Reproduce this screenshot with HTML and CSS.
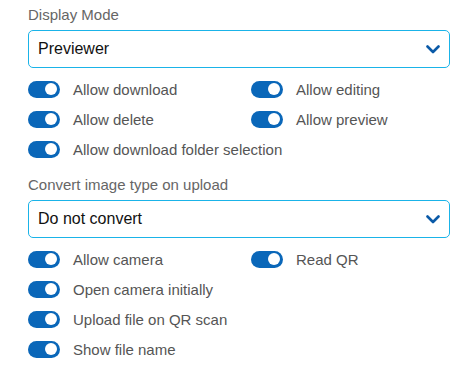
FILE: index.html
```html
<!DOCTYPE html>
<html>
<head>
<meta charset="utf-8">
<link rel="stylesheet" href="styles.css">
</head>
<body>
<div class="panel">
  <div class="field-label">Display Mode</div>
  <div class="select">
    <span class="select-value">Previewer</span>
    <svg class="chevron" width="14" height="9" viewBox="0 0 14 9"><path d="M1.5 1.5 L7 7 L12.5 1.5" fill="none" stroke="#0a5aa8" stroke-width="2.6" stroke-linecap="round" stroke-linejoin="round"/></svg>
  </div>
  <div class="toggles">
    <div class="toggle-row"><span class="switch"><span class="knob"></span></span><span class="toggle-label">Allow download</span></div>
    <div class="toggle-row"><span class="switch"><span class="knob"></span></span><span class="toggle-label">Allow editing</span></div>
    <div class="toggle-row"><span class="switch"><span class="knob"></span></span><span class="toggle-label">Allow delete</span></div>
    <div class="toggle-row"><span class="switch"><span class="knob"></span></span><span class="toggle-label">Allow preview</span></div>
    <div class="toggle-row wide"><span class="switch"><span class="knob"></span></span><span class="toggle-label">Allow download folder selection</span></div>
  </div>

  <div class="field-label second">Convert image type on upload</div>
  <div class="select">
    <span class="select-value">Do not convert</span>
    <svg class="chevron" width="14" height="9" viewBox="0 0 14 9"><path d="M1.5 1.5 L7 7 L12.5 1.5" fill="none" stroke="#0a5aa8" stroke-width="2.6" stroke-linecap="round" stroke-linejoin="round"/></svg>
  </div>
  <div class="toggles">
    <div class="toggle-row"><span class="switch"><span class="knob"></span></span><span class="toggle-label">Allow camera</span></div>
    <div class="toggle-row"><span class="switch"><span class="knob"></span></span><span class="toggle-label">Read QR</span></div>
    <div class="toggle-row wide"><span class="switch"><span class="knob"></span></span><span class="toggle-label">Open camera initially</span></div>
    <div class="toggle-row wide"><span class="switch"><span class="knob"></span></span><span class="toggle-label">Upload file on QR scan</span></div>
    <div class="toggle-row wide"><span class="switch"><span class="knob"></span></span><span class="toggle-label">Show file name</span></div>
  </div>
</div>
</body>
</html>
```

FILE: styles.css
```css
html, body {
  margin: 0;
  padding: 0;
  background: #ffffff;
}
body {
  font-family: "Liberation Sans", Arial, sans-serif;
}
.panel {
  width: 422px;
  padding: 6px 0 0 28px;
}
.field-label {
  font-size: 15px;
  line-height: 18px;
  color: #666666;
  margin-bottom: 6px;
}
.field-label.second {
  margin-top: 12px;
}
.select {
  box-sizing: border-box;
  height: 38px;
  border: 1px solid #1ab3e8;
  border-radius: 5px;
  display: flex;
  align-items: center;
  justify-content: space-between;
  padding: 0 9px 0 9px;
}
.select-value {
  font-size: 16px;
  color: #111111;
}
.chevron {
  display: block;
  margin-top: 1px;
}
.toggles {
  margin-top: 6px;
  display: grid;
  grid-template-columns: 223px 1fr;
}
.toggle-row {
  height: 30px;
  display: flex;
  align-items: center;
}
.toggle-row.wide {
  grid-column: 1 / 3;
}
.switch {
  box-sizing: border-box;
  width: 32px;
  height: 17px;
  border-radius: 9px;
  background: #0a67b9;
  display: flex;
  align-items: center;
  justify-content: flex-end;
  padding-right: 3px;
  flex: none;
}
.knob {
  width: 12px;
  height: 12px;
  border-radius: 50%;
  background: #ffffff;
}
.toggle-label {
  margin-left: 13px;
  font-size: 15px;
  color: #555555;
}
```
